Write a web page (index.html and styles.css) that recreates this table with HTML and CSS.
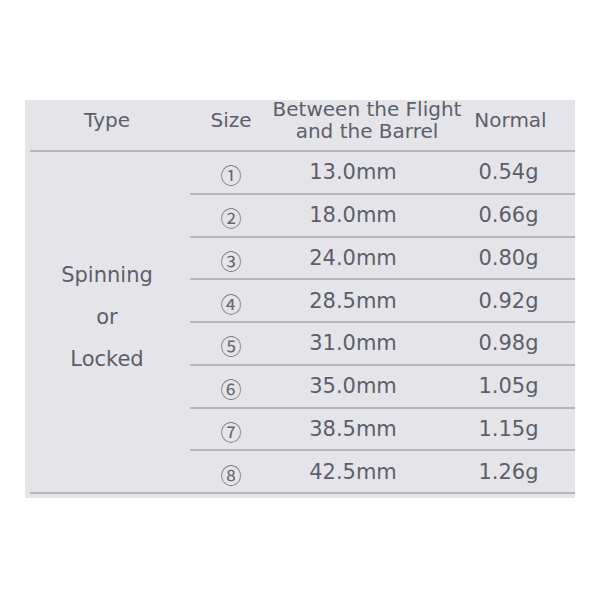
FILE: index.html
```html
<!DOCTYPE html>
<html lang="en">
<head>
<meta charset="utf-8">
<title>Shaft sizes</title>
<link rel="stylesheet" href="styles.css">
</head>
<body>
<div class="panel">
  <div class="grid">
    <div class="hd c1">Type</div>
    <div class="hd c2">Size</div>
    <div class="hd c3">Between the Flight<br>and the Barrel</div>
    <div class="hd c4">Normal</div>

    <div class="type">Spinning<br>or<br>Locked</div>

    <div class="cell num">①</div><div class="cell len">13.0mm</div><div class="cell wt">0.54g</div>
    <div class="cell num">②</div><div class="cell len">18.0mm</div><div class="cell wt">0.66g</div>
    <div class="cell num">③</div><div class="cell len">24.0mm</div><div class="cell wt">0.80g</div>
    <div class="cell num">④</div><div class="cell len">28.5mm</div><div class="cell wt">0.92g</div>
    <div class="cell num">⑤</div><div class="cell len">31.0mm</div><div class="cell wt">0.98g</div>
    <div class="cell num">⑥</div><div class="cell len">35.0mm</div><div class="cell wt">1.05g</div>
    <div class="cell num">⑦</div><div class="cell len">38.5mm</div><div class="cell wt">1.15g</div>
    <div class="cell num">⑧</div><div class="cell len">42.5mm</div><div class="cell wt">1.26g</div>
  </div>
</div>
</body>
</html>
```
FILE: styles.css
```css
html, body {
  margin: 0;
  padding: 0;
  background: #ffffff;
}

body {
  font-family: "DejaVu Sans", Verdana, sans-serif;
  color: #5c5e6b;
}

.panel {
  margin: 100px 0 0 25px;
  width: 550px;
  height: 398px;
  box-sizing: border-box;
  background: #e5e5e9;
  padding: 0 0 0 5px;
}

.grid {
  display: grid;
  grid-template-columns: 160px 82px 190px 113px;
  grid-template-rows: 52px repeat(8, 42.75px);
}

.hd {
  box-sizing: border-box;
  height: 52px;
  border-bottom: 2px solid #b6b6bb;
  font-size: 20px;
  line-height: 22px;
  display: flex;
  align-items: center;
  justify-content: center;
  text-align: center;
  padding-bottom: 10px;
}

.hd.c1 { padding-right: 6px; }
.hd.c4 { padding-right: 16px; }

.type {
  grid-column: 1;
  grid-row: 2 / span 8;
  box-sizing: border-box;
  border-bottom: 2px solid #b6b6bb;
  font-size: 21px;
  line-height: 42px;
  display: flex;
  align-items: center;
  justify-content: center;
  text-align: center;
  padding: 0 6px 10px 0;
}

.cell {
  box-sizing: border-box;
  height: 42.75px;
  border-bottom: 2px solid #b6b6bb;
  font-size: 21px;
  display: flex;
  align-items: center;
  justify-content: center;
}

.num {
  font-family: "Noto Sans CJK JP", "DejaVu Sans", sans-serif;
  color: #666670;
  padding-top: 4px;
}

.len { padding-right: 28px; }
.wt { padding-right: 20px; }
```
